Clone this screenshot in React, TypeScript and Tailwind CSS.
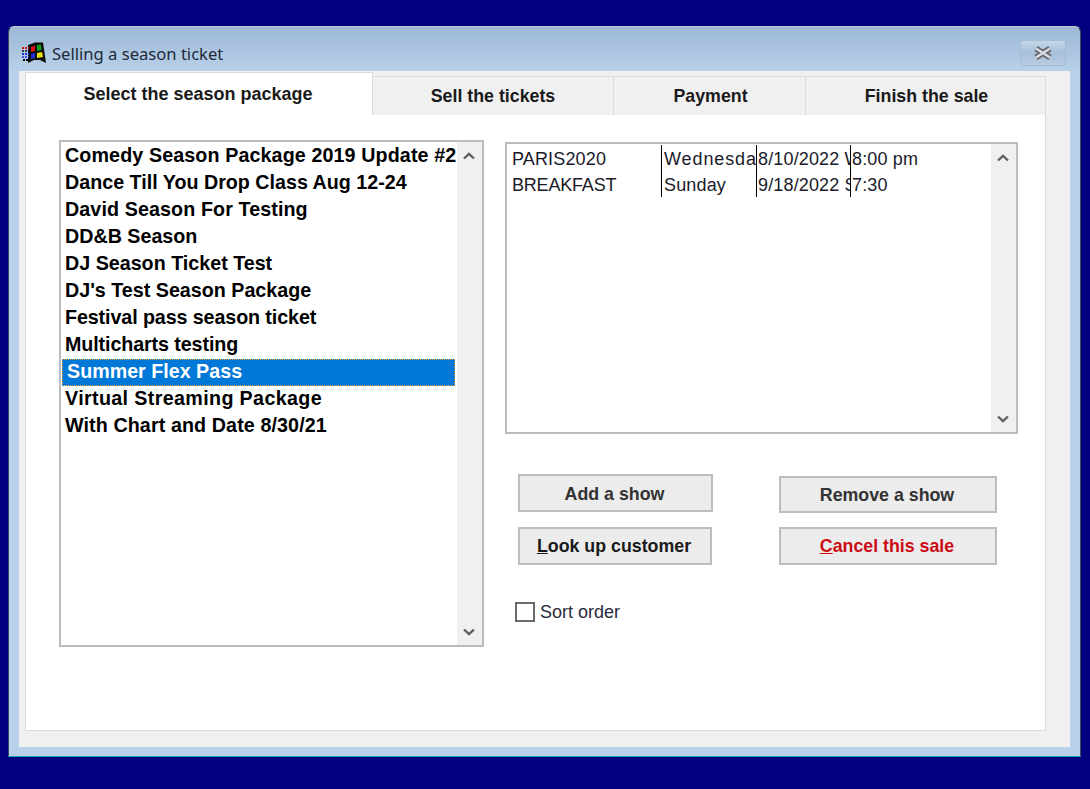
const packages = [
  { name: 'Comedy Season Package 2019 Update #2', fit: 'tracking-[0.11px]' },
  { name: 'Dance Till You Drop Class Aug 12-24', fit: '' },
  { name: 'David Season For Testing', fit: 'tracking-[0.1px]' },
  { name: 'DD&B Season', fit: '' },
  { name: 'DJ Season Ticket Test', fit: '' },
  { name: "DJ's Test Season Package", fit: '' },
  { name: 'Festival pass season ticket', fit: 'tracking-[-0.1px]' },
  { name: 'Multicharts testing', fit: 'tracking-[-0.1px]' },
  { name: 'Summer Flex Pass', fit: '' },
  { name: 'Virtual Streaming Package', fit: 'tracking-[0.36px]' },
  { name: 'With Chart and Date 8/30/21', fit: 'tracking-[0.1px]' },
];

const shows = [
  ['PARIS2020', 'Wednesday', '8/10/2022 Wednesday', '8:00 pm'],
  ['BREAKFAST', 'Sunday', '9/18/2022 Sunday', '7:30'],
];

const Chevron = ({ up }: { up?: boolean }) => (
  <svg width="12" height="8" viewBox="0 0 12 8" className="block">
    <path
      d={up ? 'M1 6.5 L6 1.8 L11 6.5' : 'M1 1.5 L6 6.2 L11 1.5'}
      fill="none"
      stroke="#606060"
      strokeWidth="2.4"
    />
  </svg>
);

const Scrollbar = () => (
  <div className="w-[25px] h-full bg-[#f0f0f0] flex flex-col items-center justify-between pt-[10px] pb-[9px] pr-[2px] shrink-0">
    <Chevron up />
    <Chevron />
  </div>
);

const AppIcon = () => (
  <svg width="26" height="22" viewBox="0 0 26 22" className="block">
    <path d="M7 3 L14 0.5 L22 0.5 L25 21 L19 18 L13 18 L7 21 Z" fill="#0c0c0c" />
    <path d="M10 5 L14 3.5 L14 9 L10 10 Z" fill="#e01010" />
    <path d="M16 3 L20 2.5 L20.5 8 L16 9 Z" fill="#10a020" />
    <path d="M10 12 L14 11 L14 16 L10 17 Z" fill="#1830d8" />
    <path d="M16 11 L21 10 L22 15 L16 16 Z" fill="#f0e010" />
    <path d="M1 6h7" stroke="#e01010" strokeWidth="2" strokeDasharray="2 1" />
    <path d="M1 9h7" stroke="#0c0c0c" strokeWidth="1.5" strokeDasharray="2 1" />
    <path d="M1 12h7" stroke="#1830d8" strokeWidth="2" strokeDasharray="2 1" />
    <path d="M1 15h7" stroke="#1830d8" strokeWidth="1.5" strokeDasharray="2 1" />
    <path d="M2 18h6" stroke="#0c0c0c" strokeWidth="2" strokeDasharray="2 1" />
  </svg>
);

const Tab = ({ label, className }: { label: string; className: string }) => (
  <div
    className={`h-[39px] mt-[4px] bg-[#f0f0f0] border-t border-r border-[#dcdcdc] flex items-center justify-center text-[17.8px] font-bold text-[#1a1a1a] ${className}`}
  >
    {label}
  </div>
);

const Button = ({
  children,
  className,
}: {
  children: React.ReactNode;
  className: string;
}) => (
  <button
    className={`bg-[#ececec] border-2 border-[#bdbdbd] flex items-center justify-center pr-[2px] text-[17.8px] font-bold ${className}`}
  >
    {children}
  </button>
);

export default function App() {
  return (
    <div className="w-[1090px] h-[789px] bg-[#000080] pt-[26px] pl-[8px] overflow-hidden font-['Liberation_Sans',Arial,sans-serif]">
      {/* Window */}
      <div className="w-[1073px] h-[731px] rounded-t-[6px] border-l border-r border-t border-b border-t-[#c8c8c8] border-l-[#3c4a5c] border-r-[#3c4a5c] border-b-[#20a8b8] bg-[linear-gradient(to_bottom,#9cb8d6,#b9d1ea_45px)] flex flex-col px-[10px]">
        {/* Title bar */}
        <div className="h-[44px] shrink-0 flex items-center relative">
          <div className="flex items-center mt-[10px]">
            <div className="mt-[-3px] ml-[2px]">
              <AppIcon />
            </div>
            <span className="ml-[5px] text-[#1e2a38] text-[16.6px] font-['Noto_Sans',sans-serif] leading-none">
              Selling a season ticket
            </span>
          </div>
          <div className="absolute right-[4px] top-[13px] w-[46px] h-[26px] rounded-[3px] border border-[#a8bcd2] bg-[linear-gradient(to_bottom,#c4d6e8,#a8c0da_50%,#b8cce2)] flex items-center justify-center">
            <svg width="22" height="16" viewBox="0 0 22 16">
              <path d="M4 3.5 L18 12.5 M18 3.5 L4 12.5" stroke="#62676e" strokeWidth="6" />
              <path d="M4 3.5 L18 12.5 M18 3.5 L4 12.5" stroke="#d8dce2" strokeWidth="2.6" />
            </svg>
          </div>
        </div>

        {/* Client area */}
        <div className="flex-1 bg-[#f0f0f0] px-[6px] flex flex-col mb-[9px]">
          {/* Tabs */}
          <div className="flex h-[43px] shrink-0 mt-[1px] relative z-10">
            <div className="w-[348px] h-[43px] bg-white border-t border-r border-l border-[#dcdcdc] flex items-start justify-center pt-[8px] text-[18px] font-bold text-[#1a1a1a]">
              <span className="pr-[2px]">Select the season package</span>
            </div>
            <Tab label="Sell the tickets" className="w-[241px]" />
            <Tab label="Payment" className="w-[192px] pl-[2px]" />
            <Tab label="Finish the sale" className="w-[240px] pl-[2px]" />
          </div>

          {/* Panel */}
          <div className="w-[1021px] h-[617px] -mt-[1px] bg-white border-l border-r border-b border-t border-[#dcdcdc] flex pl-[33px] pt-[25px]">
            {/* Packages list */}
            <div className="w-[425px] h-[507px] border-2 border-[#bcbcc0] flex shrink-0">
              <div className="flex-1 min-w-0 pt-[1px]">
                {packages.map(({ name, fit }) => (
                  <div
                    key={name}
                    className={
                      name === 'Summer Flex Pass'
                        ? 'h-[27px] ml-[1px] mr-[2px] pl-[4px] pb-[2px] flex items-center text-[19.7px] font-bold text-white bg-[#0078d7] border border-dotted border-[#e8a040] whitespace-nowrap'
                        : `h-[27px] pl-[4px] pb-[2px] flex items-center text-[19.7px] font-bold text-black whitespace-nowrap overflow-hidden ${fit}`
                    }
                  >
                    {name}
                  </div>
                ))}
              </div>
              <Scrollbar />
            </div>

            {/* Right side */}
            <div className="ml-[21px] pt-[2px] flex flex-col">
              <div className="w-[513px] h-[292px] border-2 border-[#bcbcc0] flex">
                <div className="flex-1 min-w-0 pt-[1px]">
                  {shows.map((row) => (
                    <div
                      key={row[0]}
                      className="h-[26px] flex text-[18px] tracking-[0.15px] leading-[28px] text-[#1a1a2a] whitespace-nowrap"
                    >
                      <div
                        className={`w-[154px] pl-[5px] overflow-hidden shrink-0 ${
                          row[0] === 'BREAKFAST' ? 'tracking-[-0.2px]' : ''
                        }`}
                      >
                        {row[0]}
                      </div>
                      <div
                        className={`w-[95px] pl-[2px] border-l border-black overflow-hidden shrink-0 ${
                          row[1] === 'Wednesday' ? 'tracking-[0.9px]' : ''
                        }`}
                      >
                        {row[1]}
                      </div>
                      <div className="w-[94px] pl-[1px] border-l border-black overflow-hidden shrink-0">{row[2]}</div>
                      <div className="w-[120px] pl-[1px] border-l border-black overflow-hidden shrink-0">{row[3]}</div>
                    </div>
                  ))}
                </div>
                <Scrollbar />
              </div>

              {/* Buttons */}
              <div className="flex mt-[40px] ml-[13px]">
                <div className="flex flex-col w-[195px] gap-[15px]">
                  <Button className="w-[195px] h-[38px] pt-[2px] text-[#333333]">Add a show</Button>
                  <Button className="w-[194px] h-[38px] text-[#1a1a1a]">
                    <span>
                      <span className="underline">L</span>ook up customer
                    </span>
                  </Button>
                </div>
                <div className="flex flex-col w-[218px] ml-[66px] mt-[2px] gap-[14px]">
                  <Button className="w-[218px] h-[37px] pt-[2px] text-[#333333]">Remove a show</Button>
                  <Button className="w-[218px] h-[38px] text-[#cc0c14]">
                    <span>
                      <span className="underline">C</span>ancel this sale
                    </span>
                  </Button>
                </div>
              </div>

              {/* Sort order */}
              <div className="flex items-center mt-[37px] ml-[10px]">
                <div className="w-[20px] h-[20px] border-2 border-[#6a6a6a] bg-white" />
                <span className="ml-[5px] text-[18px] leading-none text-[#2a2a3a]">Sort order</span>
              </div>
            </div>
          </div>
        </div>
      </div>
    </div>
  );
}
